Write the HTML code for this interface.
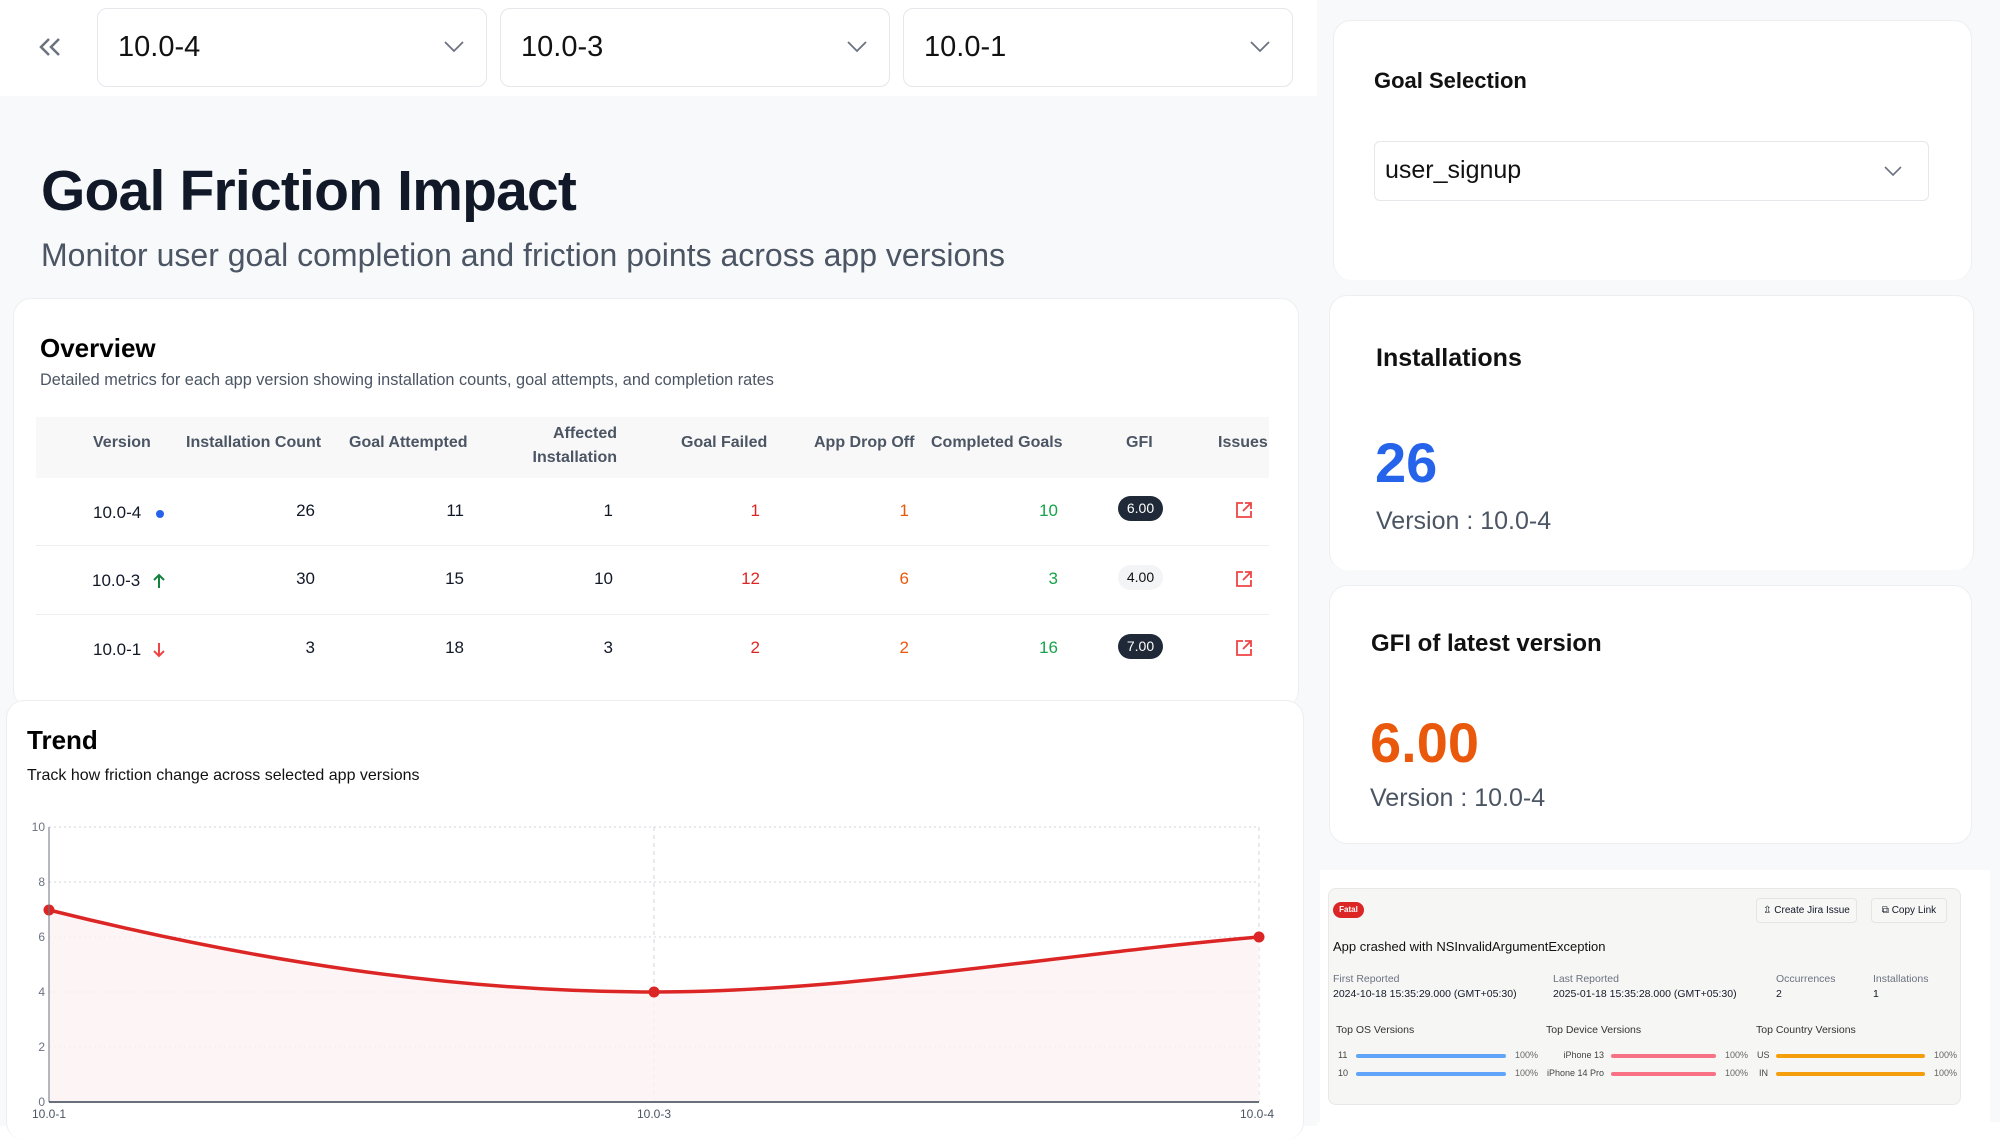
<!DOCTYPE html>
<html><head><meta charset="utf-8"><style>
*{box-sizing:border-box;margin:0;padding:0}
body{width:2000px;height:1126px;position:relative;overflow:hidden;background:#fff;font-family:"Liberation Sans",Arial,sans-serif;color:#111827}
.a{position:absolute}
.sel{position:absolute;top:8px;height:79px;border:1.5px solid #e5e7eb;border-radius:10px;background:#fff;font-size:29px;line-height:76px;padding-left:20px;color:#111}
.sel svg{position:absolute;right:22px;top:32px}
.card{position:absolute;background:#fff;border:1.5px solid #eceef1;border-radius:18px}
.th{position:absolute;top:420px;font-size:16px;color:#4b5563;font-weight:bold}
.td{position:absolute;font-size:17px}
.r{text-align:right}
.badge{position:absolute;width:45px;height:25px;border-radius:13px;font-size:14px;text-align:center;line-height:25px}
.sm{position:absolute;font-size:10.5px}
</style></head><body>
<div class="a" style="left:0;top:96px;width:1317px;height:1030px;background:#f8f9fa"></div>
<div class="a" style="left:1317px;top:0;width:683px;height:1126px;background:#f8f9fa"></div>
<div class="a" style="left:1317px;top:1122px;width:683px;height:4px;background:#fff"></div>

<svg class="a" style="left:36px;top:36px" width="28" height="22" viewBox="0 0 28 22"><path d="M13 3 L5 11 L13 19 M23 3 L15 11 L23 19" fill="none" stroke="#6b7280" stroke-width="2.5"/></svg>
<div class="sel" style="left:97px;width:390px">10.0-4<svg width="20" height="12" viewBox="0 0 20 12"><path d="M1 1 L10 10 L19 1" fill="none" stroke="#6b7280" stroke-width="1.8"/></svg></div>
<div class="sel" style="left:500px;width:390px">10.0-3<svg width="20" height="12" viewBox="0 0 20 12"><path d="M1 1 L10 10 L19 1" fill="none" stroke="#6b7280" stroke-width="1.8"/></svg></div>
<div class="sel" style="left:903px;width:390px">10.0-1<svg width="20" height="12" viewBox="0 0 20 12"><path d="M1 1 L10 10 L19 1" fill="none" stroke="#6b7280" stroke-width="1.8"/></svg></div>

<div class="a" style="left:41px;top:158px;font-size:57px;font-weight:bold;color:#111827;letter-spacing:-0.8px">Goal Friction Impact</div>
<div class="a" style="left:41px;top:237px;font-size:32px;color:#4b5563">Monitor user goal completion and friction points across app versions</div>

<div class="card" style="left:13px;top:298px;width:1286px;height:410px;border-bottom:none"></div>
<div class="a" style="left:40px;top:333px;font-size:26px;font-weight:bold;color:#000">Overview</div>
<div class="a" style="left:40px;top:371px;font-size:16.3px;color:#4b5563">Detailed metrics for each app version showing installation counts, goal attempts, and completion rates</div>
<div class="a" style="left:36px;top:417px;width:1233px;height:61px;background:#f8f8f9"></div>
<div class="th" style="left:93px;top:434px">Version</div>
<div class="th" style="left:186px;top:434px">Installation Count</div>
<div class="th" style="left:349px;top:434px">Goal Attempted</div>
<div class="th r" style="left:500px;width:117px;top:422px;line-height:24px">Affected<br>Installation</div>
<div class="th" style="left:681px;top:434px">Goal Failed</div>
<div class="th" style="left:814px;top:434px">App Drop Off</div>
<div class="th" style="left:931px;top:434px">Completed Goals</div>
<div class="th" style="left:1126px;top:434px">GFI</div>
<div class="th" style="left:1218px;top:434px">Issues</div>
<div class="a" style="left:36px;top:545px;width:1233px;height:1px;background:#eeeeee"></div>
<div class="a" style="left:36px;top:614px;width:1233px;height:1px;background:#eeeeee"></div>

<div class="td" style="left:93px;top:503px">10.0-4</div>
<div class="a" style="left:156px;top:510px;width:8px;height:8px;border-radius:50%;background:#2563eb"></div>
<div class="td" style="left:92px;top:571px">10.0-3</div>
<svg class="a" style="left:153px;top:573px" width="12" height="16" viewBox="0 0 12 16"><path d="M6 15 V2 M1 7 L6 2 L11 7" fill="none" stroke="#15803d" stroke-width="2"/></svg>
<div class="td" style="left:93px;top:640px">10.0-1</div>
<svg class="a" style="left:153px;top:642px" width="12" height="16" viewBox="0 0 12 16"><path d="M6 1 V14 M1 9 L6 14 L11 9" fill="none" stroke="#ef4444" stroke-width="2"/></svg>

<div class="td r" style="left:215px;width:100px;top:501px">26</div>
<div class="td r" style="left:215px;width:100px;top:569px">30</div>
<div class="td r" style="left:215px;width:100px;top:638px">3</div>
<div class="td r" style="left:364px;width:100px;top:501px">11</div>
<div class="td r" style="left:364px;width:100px;top:569px">15</div>
<div class="td r" style="left:364px;width:100px;top:638px">18</div>
<div class="td r" style="left:513px;width:100px;top:501px">1</div>
<div class="td r" style="left:513px;width:100px;top:569px">10</div>
<div class="td r" style="left:513px;width:100px;top:638px">3</div>
<div class="td r" style="left:660px;width:100px;top:501px;color:#dc2626">1</div>
<div class="td r" style="left:660px;width:100px;top:569px;color:#dc2626">12</div>
<div class="td r" style="left:660px;width:100px;top:638px;color:#dc2626">2</div>
<div class="td r" style="left:809px;width:100px;top:501px;color:#ea580c">1</div>
<div class="td r" style="left:809px;width:100px;top:569px;color:#ea580c">6</div>
<div class="td r" style="left:809px;width:100px;top:638px;color:#ea580c">2</div>
<div class="td r" style="left:958px;width:100px;top:501px;color:#16a34a">10</div>
<div class="td r" style="left:958px;width:100px;top:569px;color:#16a34a">3</div>
<div class="td r" style="left:958px;width:100px;top:638px;color:#16a34a">16</div>
<div class="badge" style="left:1118px;top:496px;background:#1f2937;color:#fff">6.00</div>
<div class="badge" style="left:1118px;top:565px;background:#f3f4f6;color:#111">4.00</div>
<div class="badge" style="left:1118px;top:634px;background:#1f2937;color:#fff">7.00</div>
<svg class="a" style="left:1235px;top:501px" width="18" height="18" viewBox="0 0 18 18"><path d="M8 2 H2 V16 H16 V10 M10 2 H16 V8 M16 2 L8 10" fill="none" stroke="#ef4444" stroke-width="1.8"/></svg>
<svg class="a" style="left:1235px;top:570px" width="18" height="18" viewBox="0 0 18 18"><path d="M8 2 H2 V16 H16 V10 M10 2 H16 V8 M16 2 L8 10" fill="none" stroke="#ef4444" stroke-width="1.8"/></svg>
<svg class="a" style="left:1235px;top:639px" width="18" height="18" viewBox="0 0 18 18"><path d="M8 2 H2 V16 H16 V10 M10 2 H16 V8 M16 2 L8 10" fill="none" stroke="#ef4444" stroke-width="1.8"/></svg>

<div class="card" style="left:6px;top:700px;width:1298px;height:440px;border-bottom:none"></div>
<div class="a" style="left:27px;top:725px;font-size:26px;font-weight:bold;color:#000">Trend</div>
<div class="a" style="left:27px;top:767px;font-size:16px;color:#111">Track how friction change across selected app versions</div>
<svg class="a" style="left:0;top:810px" width="1310" height="316" viewBox="0 810 1310 316">
<g stroke="#d1d5db" stroke-dasharray="2 3" stroke-width="1">
<line x1="49" y1="827" x2="1259" y2="827"/><line x1="49" y1="882" x2="1259" y2="882"/><line x1="49" y1="937" x2="1259" y2="937"/><line x1="49" y1="992" x2="1259" y2="992"/><line x1="49" y1="1047" x2="1259" y2="1047"/>
</g>
<g stroke="#d1d5db" stroke-dasharray="4 4"><line x1="654" y1="827" x2="654" y2="1102"/><line x1="1259" y1="827" x2="1259" y2="1102"/></g>
<path d="M49 910 C250 960 450 992 654 992 C850 992 1050 955 1259 937 L1259 1102 L49 1102 Z" fill="#fdf2f2" opacity="0.8"/>
<path d="M49 910 C250 960 450 992 654 992 C850 992 1050 955 1259 937" fill="none" stroke="#dc2626" stroke-width="3.5"/>
<circle cx="49" cy="910" r="5.5" fill="#dc2626"/><circle cx="654" cy="992" r="5.5" fill="#dc2626"/><circle cx="1259" cy="937" r="5.5" fill="#dc2626"/>
<line x1="49" y1="827" x2="49" y2="1102" stroke="#6b7280"/>
<line x1="49" y1="1102" x2="1259" y2="1102" stroke="#374151" stroke-width="1.5"/>
<g font-size="12" fill="#6b7280" font-family="Liberation Sans" text-anchor="end">
<text x="45" y="831">10</text><text x="45" y="886">8</text><text x="45" y="941">6</text><text x="45" y="996">4</text><text x="45" y="1051">2</text><text x="45" y="1106">0</text></g>
<g font-size="12" fill="#4b5563" font-family="Liberation Sans" text-anchor="middle">
<text x="49" y="1118">10.0-1</text><text x="654" y="1118">10.0-3</text><text x="1257" y="1118">10.0-4</text></g>
</svg>

<div class="card" style="left:1333px;top:20px;width:639px;height:260px;border-bottom:none"></div>
<div class="a" style="left:1374px;top:68px;font-size:22px;font-weight:bold;color:#111">Goal Selection</div>
<div class="a" style="left:1374px;top:141px;width:555px;height:60px;border:1.5px solid #e5e7eb;border-radius:6px;font-size:25px;line-height:57px;padding-left:10px;color:#111">user_signup
<svg style="position:absolute;right:26px;top:24px" width="18" height="10" viewBox="0 0 18 10"><path d="M1 1 L9 9 L17 1" fill="none" stroke="#6b7280" stroke-width="1.6"/></svg></div>

<div class="card" style="left:1329px;top:295px;width:645px;height:275px;border-bottom:none"></div>
<div class="a" style="left:1376px;top:344px;font-size:25px;font-weight:bold;color:#111">Installations</div>
<div class="a" style="left:1375px;top:430px;font-size:56px;font-weight:bold;color:#2563eb">26</div>
<div class="a" style="left:1376px;top:507px;font-size:25px;color:#4b5563">Version : 10.0-4</div>

<div class="card" style="left:1329px;top:585px;width:643px;height:259px"></div>
<div class="a" style="left:1371px;top:630px;font-size:24px;font-weight:bold;color:#111">GFI of latest version</div>
<div class="a" style="left:1370px;top:710px;font-size:56px;font-weight:bold;color:#ea580c">6.00</div>
<div class="a" style="left:1370px;top:784px;font-size:25px;color:#4b5563">Version : 10.0-4</div>

<div class="a" style="left:1320px;top:870px;width:670px;height:252px;background:#fff"></div>
<div class="a" style="left:1328px;top:888px;width:633px;height:217px;background:#f6f6f5;border:1px solid #e8e8e8;border-radius:8px"></div>
<div class="a" style="left:1333px;top:902px;width:31px;height:16px;border-radius:8px;background:#dc2626;color:#fff;font-size:8px;font-weight:bold;text-align:center;line-height:16px">Fatal</div>
<div class="a" style="left:1756px;top:898px;width:101px;height:25px;border:1px solid #e5e5e5;border-radius:4px;font-size:10px;line-height:23px;text-align:center;background:#f7f7f6">⇫ Create Jira Issue</div>
<div class="a" style="left:1871px;top:898px;width:76px;height:25px;border:1px solid #e5e5e5;border-radius:4px;font-size:10px;line-height:23px;text-align:center;background:#f7f7f6">⧉ Copy Link</div>
<div class="a" style="left:1333px;top:939px;font-size:13px;color:#111">App crashed with NSInvalidArgumentException</div>
<div class="sm" style="left:1333px;top:973px;color:#6b7280">First Reported</div>
<div class="sm" style="left:1333px;top:988px">2024-10-18 15:35:29.000 (GMT+05:30)</div>
<div class="sm" style="left:1553px;top:973px;color:#6b7280">Last Reported</div>
<div class="sm" style="left:1553px;top:988px">2025-01-18 15:35:28.000 (GMT+05:30)</div>
<div class="sm" style="left:1776px;top:973px;color:#6b7280">Occurrences</div>
<div class="sm" style="left:1776px;top:988px">2</div>
<div class="sm" style="left:1873px;top:973px;color:#6b7280">Installations</div>
<div class="sm" style="left:1873px;top:988px">1</div>
<div class="sm" style="left:1336px;top:1024px;color:#333">Top OS Versions</div>
<div class="sm" style="left:1546px;top:1024px;color:#333">Top Device Versions</div>
<div class="sm" style="left:1756px;top:1024px;color:#333">Top Country Versions</div>
<div class="sm" style="left:1338px;top:1050px;font-size:9px;color:#444">11</div>
<div class="sm" style="left:1338px;top:1068px;font-size:9px;color:#444">10</div>
<div class="a" style="left:1356px;top:1054px;width:150px;height:4px;border-radius:2px;background:#60a5fa"></div>
<div class="a" style="left:1356px;top:1072px;width:150px;height:4px;border-radius:2px;background:#60a5fa"></div>
<div class="sm" style="left:1515px;top:1050px;font-size:9px;color:#666">100%</div>
<div class="sm" style="left:1515px;top:1068px;font-size:9px;color:#666">100%</div>
<div class="sm r" style="left:1520px;width:84px;top:1050px;font-size:9px;color:#444">iPhone 13</div>
<div class="sm r" style="left:1520px;width:84px;top:1068px;font-size:9px;color:#444">iPhone 14 Pro</div>
<div class="a" style="left:1611px;top:1054px;width:105px;height:4px;border-radius:2px;background:#f87185"></div>
<div class="a" style="left:1611px;top:1072px;width:105px;height:4px;border-radius:2px;background:#f87185"></div>
<div class="sm" style="left:1725px;top:1050px;font-size:9px;color:#666">100%</div>
<div class="sm" style="left:1725px;top:1068px;font-size:9px;color:#666">100%</div>
<div class="sm" style="left:1757px;top:1050px;font-size:9px;color:#444">US</div>
<div class="sm" style="left:1759px;top:1068px;font-size:9px;color:#444">IN</div>
<div class="a" style="left:1776px;top:1054px;width:149px;height:4px;border-radius:2px;background:#f59e0b"></div>
<div class="a" style="left:1776px;top:1072px;width:149px;height:4px;border-radius:2px;background:#f59e0b"></div>
<div class="sm" style="left:1934px;top:1050px;font-size:9px;color:#666">100%</div>
<div class="sm" style="left:1934px;top:1068px;font-size:9px;color:#666">100%</div>
</body></html>
